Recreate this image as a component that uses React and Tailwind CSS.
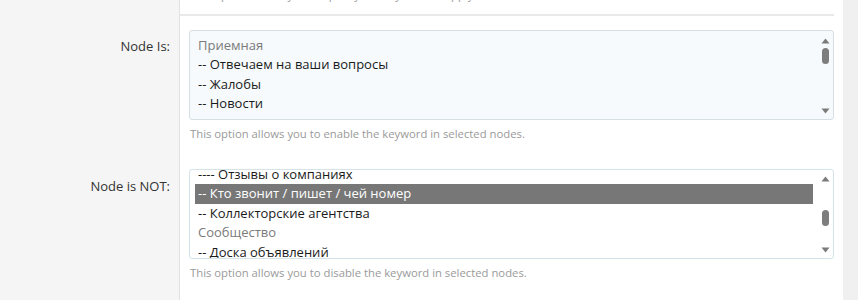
const font = { fontFamily: '"Open Sans", "Noto Sans", sans-serif' };

function Arrow({ up }) {
  return (
    <svg width="9" height="6" viewBox="0 0 9 6" className="block">
      {up ? <path d="M4.5 0.5 L8.5 5.5 L0.5 5.5 Z" fill="#7a7a7a" /> : <path d="M0.5 0.5 L8.5 0.5 L4.5 5.5 Z" fill="#7a7a7a" />}
    </svg>
  );
}

function Scrollbar({ thumbTop, upTop }) {
  return (
    <div className="relative w-[20px] shrink-0">
      <div className="absolute left-[8px]" style={{ top: upTop }}>
        <Arrow up />
      </div>
      <div className="absolute left-[9px] h-[16px] w-[7px] rounded-full bg-[#7d7d7d]" style={{ top: thumbTop }} />
      <div className="absolute bottom-[5px] left-[8px]">
        <Arrow />
      </div>
    </div>
  );
}

function ListBox({ options, offset, bg, border, thumbTop, upTop }) {
  return (
    <div className={`flex h-[90px] overflow-hidden rounded-[3px] border ${border} ${bg}`}>
      <div className="flex-1 overflow-hidden pl-[5px]">
        <div style={{ marginTop: offset }}>
          {options.map((o, i) => (
            <div
              key={i}
              className={`h-[19.4px] px-[3px] text-[13px] leading-[19.4px] whitespace-nowrap ${
                o.selected ? 'bg-[#777777] text-white' : o.group ? 'text-[#7b7b7b]' : 'text-[#1a1a1a]'
              }`}
            >
              {o.label}
            </div>
          ))}
        </div>
      </div>
      <Scrollbar thumbTop={thumbTop} upTop={upTop} />
    </div>
  );
}

const isOptions = [
  { label: 'Приемная', group: true },
  { label: '-- Отвечаем на ваши вопросы' },
  { label: '-- Жалобы' },
  { label: '-- Новости' },
  { label: '-- Отзывы' },
];

const notOptions = [
  { label: '---- Отзывы о компаниях' },
  { label: '-- Кто звонит / пишет / чей номер', selected: true },
  { label: '-- Коллекторские агентства' },
  { label: 'Сообщество', group: true },
  { label: '-- Доска объявлений' },
];

export default function App() {
  return (
    <div className="flex h-[300px] w-[858px] overflow-hidden bg-white" style={font}>
      <div className="flex flex-1 flex-col">
        {/* previous row, mostly scrolled away */}
        <div className="flex h-[30px]">
          <div className="w-[180px] shrink-0 border-r border-[#e2e2e2] bg-[#f5f5f5]" />
          <div className="flex-1 pr-[9px]">
            <div className="h-[16px] overflow-hidden border-b-2 border-[#e9e9e9]">
              <p className="mt-[-12.5px] pl-[10px] text-[11.3px] leading-[14px] text-[#9a9a9a]">
                This option allows you to specify the keyword to apply in selected nodes.
              </p>
            </div>
          </div>
        </div>

        <div className="flex h-[139px]">
          <div className="w-[180px] shrink-0 border-r border-[#e2e2e2] bg-[#f5f5f5] pr-[9px] pt-[7px] text-right text-[13px] leading-[19px] text-[#333]">
            Node Is:
          </div>
          <div className="flex-1 pl-[9px] pr-[9px]">
            <ListBox options={isOptions} offset={5} bg="bg-[#f6fafc]" border="border-[#d5dfe4]" thumbTop={17} upTop={7} />
            <p className="mt-[7px] pl-[1px] text-[11.3px] leading-[14px] text-[#9a9a9a]">
              This option allows you to enable the keyword in selected nodes.
            </p>
          </div>
        </div>

        <div className="flex flex-1">
          <div className="w-[180px] shrink-0 border-r border-[#e2e2e2] bg-[#f5f5f5] pr-[9px] pt-[8px] text-right text-[13px] leading-[19px] text-[#333]">
            Node is NOT:
          </div>
          <div className="flex-1 pl-[9px] pr-[9px]">
            <ListBox options={notOptions} offset={-5} bg="bg-white" border="border-[#d4e4ea]" thumbTop={40} upTop={6} />
            <p className="mt-[7px] pl-[1px] text-[11.3px] leading-[14px] text-[#9a9a9a]">
              This option allows you to disable the keyword in selected nodes.
            </p>
          </div>
        </div>
      </div>
      <div className="w-[15px] shrink-0 bg-[#f0f0f0]" />
    </div>
  );
}
